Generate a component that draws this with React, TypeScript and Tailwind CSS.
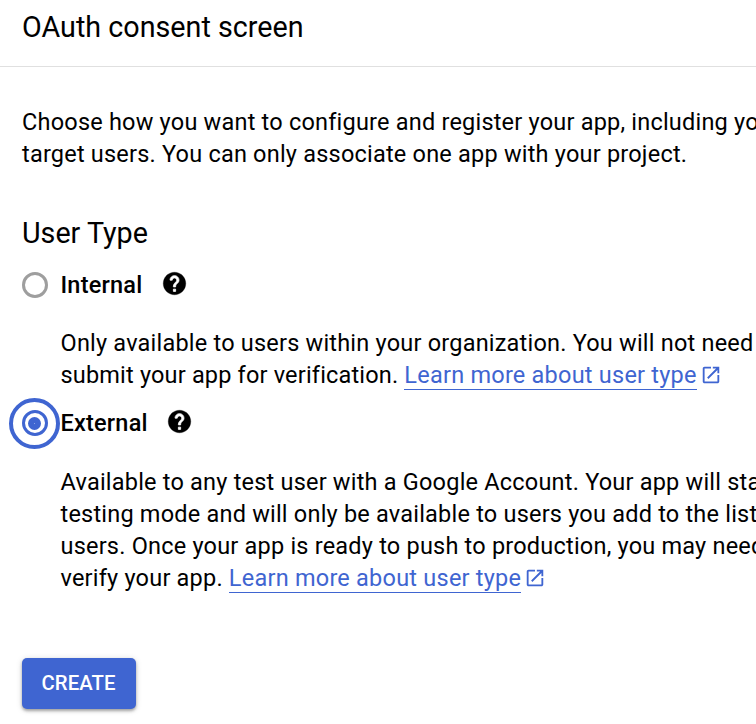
import React from "react";

function HelpIcon() {
  return (
    <svg viewBox="0 0 24 24" className="relative -top-[2px] size-[27px] shrink-0" fill="black">
      <path
        stroke="black"
        strokeWidth="0.3"
        d="M12 2C6.48 2 2 6.48 2 12s4.48 10 10 10 10-4.48 10-10S17.52 2 12 2z"
      />
      <path
        fill="white"
        stroke="white"
        strokeWidth="0.7"
        d="M13 19h-2v-2h2v2zm2.07-7.75l-.9.92C13.45 12.9 13 13.5 13 15h-2v-.5c0-1.1.45-2.1 1.17-2.83l1.24-1.26c.37-.36.59-.86.59-1.41 0-1.1-.9-2-2-2s-2 .9-2 2H8c0-2.21 1.79-4 4-4s4 1.79 4 4c0 .88-.36 1.68-.93 2.25z"
      />
    </svg>
  );
}

function LearnMore() {
  return (
    <>
      <a className="inline-block h-[31px] border-b border-[#3f65d1] tracking-[0.23px] text-[#3f65d1]">Learn more about user type</a>
      <svg viewBox="0 0 24 24" className="ml-[3px] inline-block size-[22px] align-[-3px]" fill="#3f65d1">
        <path d="M19 19H5V5h7V3H5c-1.11 0-2 .9-2 2v14c0 1.1.89 2 2 2h14c1.1 0 2-.9 2-2v-7h-2v7zM14 3v2h3.59l-9.83 9.83 1.41 1.41L19 6.41V10h2V3h-7z" />
      </svg>
    </>
  );
}

export default function App() {
  return (
    <main className="h-[724px] w-[756px] overflow-hidden bg-white font-[Roboto,sans-serif] text-[23.5px] leading-8 tracking-[0.21px] whitespace-nowrap text-black">
      <header className="h-[67px] border-b border-[#e0e0e0] pt-[11px] pl-[22px]">
        <h1 className="text-[28.7px] leading-8 tracking-[0.02px]">OAuth consent screen</h1>
      </header>
      <p className="mt-[39px] ml-[22px]">
        Choose how you want to configure and register your app, including your
        <br />
        target users. You can only associate one app with your project.
      </p>
      <h2 className="mt-[47px] ml-[22px] text-[28.7px] leading-8 tracking-normal">User Type</h2>
      <div className="mt-5 ml-[22px] flex h-8 items-center">
        <span className="size-[26px] rounded-full border-[3px] border-[#9e9e9e]" />
        <span className="ml-[12.5px] w-[100.5px] font-medium">Internal</span>
        <HelpIcon />
      </div>
      <p className="mt-[26px] ml-[60.5px]">
        Only available to users within your organization. You will not need
        <br />
        <span className="tracking-[0.18px]">submit your app for verification. </span>
        <LearnMore />
      </p>
      <div className="mt-4 ml-[9px] flex h-8 items-center">
        <span className="flex size-[51px] items-center justify-center rounded-full border-4 border-[#3f65d1]">
          <span className="flex size-[26px] items-center justify-center rounded-full border-[3px] border-[#3f65d1]">
            <span className="flex size-[13px] items-center justify-center rounded-full bg-[#3f65d1]">
              <span className="size-px bg-[#8ca3e3]" />
            </span>
          </span>
        </span>
        <span className="ml-[0.5px] w-[105.5px] font-medium">External</span>
        <HelpIcon />
      </div>
      <p className="mt-[27px] ml-[60.5px]">
        Available to any test user with a Google Account. Your app will start
        <br />
        testing mode and will only be available to users you add to the list
        <br />
        users. Once your app is ready to push to production, you may need
        <br />
        verify your app. <LearnMore />
      </p>
      <button className="mt-16 ml-[22px] block h-[51px] w-[114px] rounded-[5px] bg-[#3f65d1] pr-[1px] pb-[2px] text-[20.3px] font-medium tracking-[0.1px] text-white shadow-[0_2px_3px_rgba(0,0,0,0.3),0_1px_6px_rgba(0,0,0,0.15)]">
        CREATE
      </button>
    </main>
  );
}
